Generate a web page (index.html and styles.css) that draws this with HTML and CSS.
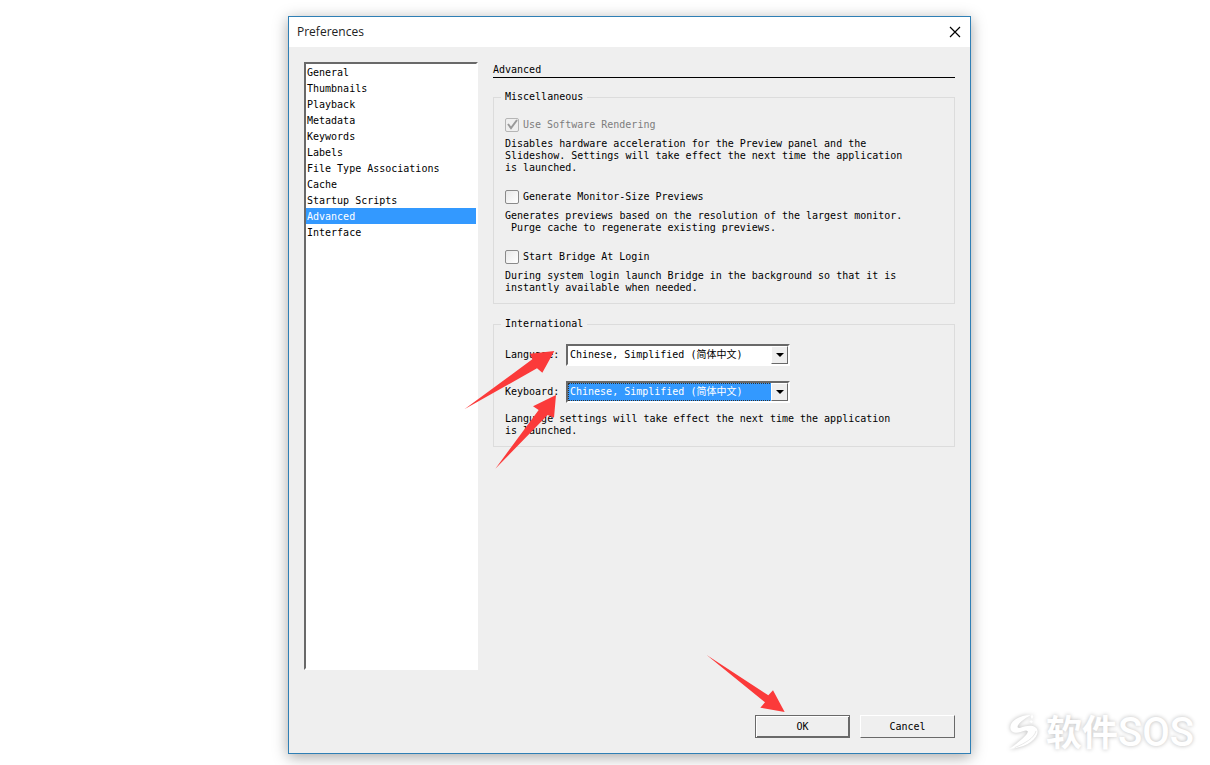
FILE: index.html
```html
<!DOCTYPE html>
<html lang="en">
<head>
  <meta charset="UTF-8">
  <meta name="viewport" content="width=device-width, initial-scale=1">
  <title>Preferences</title>
  <link rel="stylesheet" href="styles.css">
</head>
<body>
  <main class="dialog">
    <header class="titlebar">
      <h1>Preferences</h1>
      <button class="close" type="button" aria-label="Close">
        <svg width="12" height="12" viewBox="0 0 12 12"><path d="M1 1l10 10M11 1L1 11" stroke="#000" stroke-width="1.2"/></svg>
      </button>
    </header>

    <div class="content">
      <nav class="sections">
        <a href="#general">General</a>
        <a href="#thumbnails">Thumbnails</a>
        <a href="#playback">Playback</a>
        <a href="#metadata">Metadata</a>
        <a href="#keywords">Keywords</a>
        <a href="#labels">Labels</a>
        <a href="#file-types">File Type Associations</a>
        <a href="#cache">Cache</a>
        <a href="#scripts">Startup Scripts</a>
        <a href="#advanced" class="active">Advanced</a>
        <a href="#interface">Interface</a>
      </nav>

      <section class="pane">
        <h2>Advanced</h2>

        <fieldset>
          <legend>Miscellaneous</legend>
          <div class="option">
            <input type="checkbox" id="software" checked disabled>
            <label for="software">Use Software Rendering</label>
          </div>
          <p>Disables hardware acceleration for the Preview panel and the<br>Slideshow. Settings will take effect the next time the application<br>is launched.</p>
          <div class="option">
            <input type="checkbox" id="monitor">
            <label for="monitor">Generate Monitor-Size Previews</label>
          </div>
          <p>Generates previews based on the resolution of the largest monitor.<br>&nbsp;Purge cache to regenerate existing previews.</p>
          <div class="option">
            <input type="checkbox" id="login">
            <label for="login">Start Bridge At Login</label>
          </div>
          <p>During system login launch Bridge in the background so that it is<br>instantly available when needed.</p>
        </fieldset>

        <fieldset>
          <legend>International</legend>
          <div class="field">
            <label for="language">Language:</label>
            <div class="combo">
              <select id="language"><option>Chinese, Simplified (简体中文)</option></select>
            </div>
          </div>
          <div class="field">
            <label for="keyboard">Keyboard:</label>
            <div class="combo selected">
              <select id="keyboard"><option>Chinese, Simplified (简体中文)</option></select>
            </div>
          </div>
          <p class="note">Language settings will take effect the next time the application<br>is launched.</p>
        </fieldset>
      </section>
    </div>

    <footer class="actions">
      <button class="btn default" type="button">OK</button>
      <button class="btn" type="button">Cancel</button>
    </footer>

    <svg class="arrows-fields" width="110" height="165" viewBox="0 0 330 495" fill="#fb3a3a">
      <path d="M28 298L232 148L225 131L298 123L262 188L246 175Z"/>
      <path d="M121 476L251 300L234 289L303 255L297 323L278 315Z"/>
    </svg>
    <svg class="arrow-ok" width="90" height="70" viewBox="0 0 270 210" fill="#fb3a3a">
      <path d="M20 30L205 151L219 136L254 201L181 188L195 172Z"/>
    </svg>
  </main>

  <div class="watermark">
    <svg width="32" height="38" viewBox="0 0 96 114" fill="#fff">
      <path d="M68 6C34 6 8 24 7 42C6 58 22 62 38 57C46 54 56 50 59 55C62 64 36 84 4 108C44 104 80 88 88 62C94 42 72 34 52 40C42 43 32 47 29 43C27 35 44 20 68 6Z"/>
      <path d="M68 11l4-7 4 7-4 7zM64 25l6-3 5 4-5 5z"/>
      <path d="M20 104C52 90 78 76 84 54" fill="none" stroke="#ddd" stroke-width="2"/>
    </svg>
    <span class="cn">软件<span class="sos">SOS</span></span>
  </div>
</body>
</html>
```
FILE: styles.css
```css
:root {
  --face: #efefef;
  --line: #dcdcdc;
  --dark: #696969;
  --accent: #3399ff;
}
*, *::before, *::after {
  box-sizing: border-box;
}
body {
  margin: 0;
  min-height: 100vh;
  padding: 16px 239px 11px 288px;
  display: flex;
  background: #fff;
  color: #000;
  font: 10px/12px "DejaVu Sans Mono", "Noto Sans CJK SC", monospace;
}
h1, h2, p {
  margin: 0;
  font-weight: normal;
}
.dialog {
  position: relative;
  flex: 1;
  display: flex;
  flex-direction: column;
  background: var(--face);
  border: 1px solid #2f7fb5;
  box-shadow: 0 3px 14px rgba(0, 0, 0, 0.35);
}
.titlebar {
  display: flex;
  align-items: center;
  justify-content: space-between;
  height: 30px;
  padding: 0 8px;
  background: #fff;
}
h1 {
  font: 12px/16px "Open Sans", sans-serif;
  color: #222;
}
.close {
  display: flex;
  padding: 1px;
  border: 0;
  background: none;
}
.content {
  flex: 1;
  display: flex;
  gap: 15px;
  padding: 15px 15px 0;
}
.sections {
  width: 174px;
  background: #fff;
  border: 2px solid;
  border-color: var(--dark) #fff #fff var(--dark);
}
.sections a {
  display: block;
  height: 16px;
  padding: 1px 0 0 1px;
  line-height: 16px;
  color: #000;
  text-decoration: none;
}
.sections .active {
  background: var(--accent);
  color: #fff;
}
.pane {
  flex: 1;
}
h2 {
  margin-bottom: 13px;
  font-size: 10px;
  line-height: 15px;
  border-bottom: 1px solid #000;
}
fieldset {
  margin: 0 0 14px;
  padding: 14px 11px 9px;
  border: 1px solid var(--line);
}
legend {
  margin-left: -4px;
  padding: 0 4px;
}
.option {
  display: flex;
  align-items: center;
  gap: 4px;
  height: 16px;
  margin-bottom: 5px;
}
.option input {
  appearance: none;
  width: 14px;
  height: 14px;
  margin: 0;
  border: 1px solid #8a8a8a;
  border-radius: 2px;
  background: linear-gradient(135deg, #e8e8e8, #fff);
}
.option input:disabled {
  border-color: #b5b5b5;
}
.option input:checked {
  background: url('data:image/svg+xml,<svg xmlns="http://www.w3.org/2000/svg" viewBox="0 0 12 12"><path d="M2 5l3 4L11 1" fill="none" stroke="%23999" stroke-width="2"/></svg>');
}
.option input:disabled + label {
  color: #7d7d7d;
}
p + .option {
  margin-top: 15px;
}
.field {
  display: flex;
  align-items: center;
  margin-bottom: 15px;
}
.field label {
  width: 61px;
}
.combo {
  position: relative;
  width: 224px;
}
.combo::after {
  content: "";
  position: absolute;
  top: 2px;
  right: 2px;
  width: 17px;
  height: 18px;
  border: 1px solid;
  border-color: #fff var(--dark) var(--dark) #fff;
  background: var(--face);
  pointer-events: none;
}
.combo::before {
  content: "";
  position: absolute;
  z-index: 1;
  top: 9px;
  right: 6px;
  border: 4px solid transparent;
  border-top-color: #000;
  border-bottom: 0;
  pointer-events: none;
}
.combo select {
  appearance: none;
  display: block;
  width: 100%;
  height: 22px;
  padding: 0 20px 0 2px;
  border: 2px solid;
  border-color: var(--dark) #fff #fff var(--dark);
  border-radius: 0;
  background: #fff;
  color: #000;
  font: inherit;
}
.selected select {
  background: var(--accent);
  color: #fff;
  outline: 1px dotted #333;
  outline-offset: -3px;
}
.note {
  margin-top: -5px;
}
.actions {
  display: flex;
  justify-content: flex-end;
  gap: 10px;
  padding: 45px 15px 15px;
}
.btn {
  width: 95px;
  height: 23px;
  padding: 0;
  border: 1px solid;
  border-color: #fff var(--dark) var(--dark) #fff;
  background: var(--face);
  color: #000;
  font: inherit;
}
.btn.default {
  border-color: var(--dark);
  box-shadow: inset 1px 1px #fff, inset -1px -1px var(--dark);
}
.arrows-fields {
  position: absolute;
  left: 166px;
  top: 293px;
  pointer-events: none;
}
.arrow-ok {
  position: absolute;
  right: 180px;
  bottom: 38px;
  pointer-events: none;
}
.watermark {
  position: absolute;
  right: 16px;
  bottom: 10px;
  display: flex;
  align-items: center;
  color: #fff;
  line-height: 44px;
  text-shadow: 0 0 4px #bbb;
}
.watermark svg {
  margin-right: 6px;
  overflow: visible;
  filter: drop-shadow(0 0 2px #bbb);
}
.cn {
  font-family: "Noto Sans CJK SC", sans-serif;
  font-size: 36px;
  font-weight: bold;
}
.sos {
  font-family: Roboto, sans-serif;
  font-size: 40px;
  font-weight: 500;
}
```
